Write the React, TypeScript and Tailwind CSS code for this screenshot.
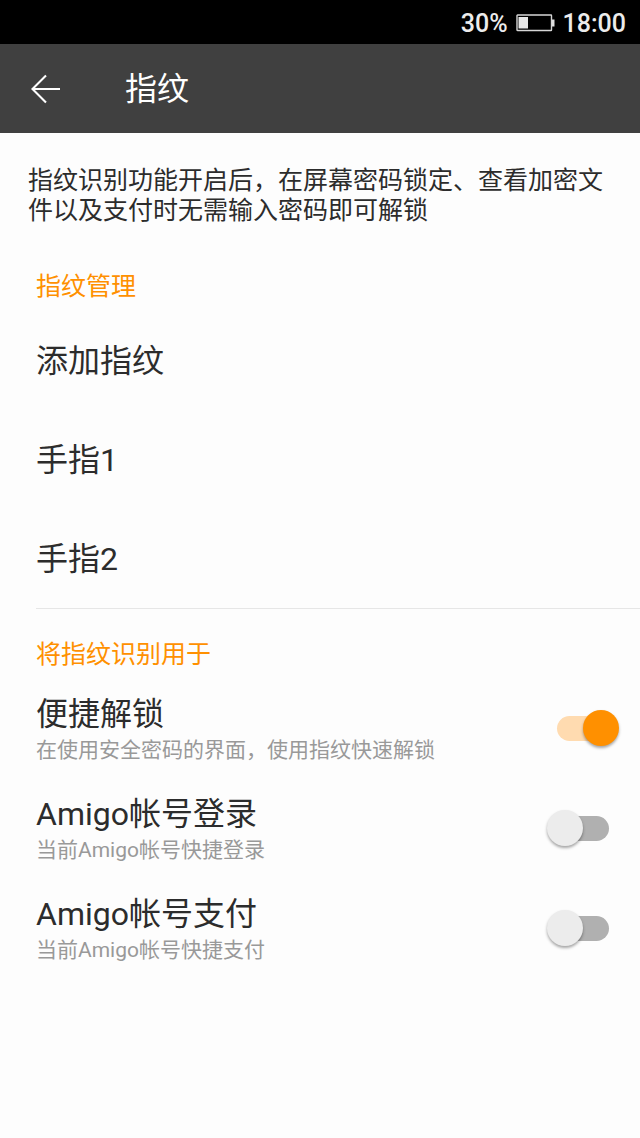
import { useState } from 'react';

interface Feature {
  id: string;
  title: string;
  summary: string;
}

const FINGERS = ['手指1', '手指2'];

const FEATURES: Feature[] = [
  { id: 'unlock', title: '便捷解锁', summary: '在使用安全密码的界面，使用指纹快速解锁' },
  { id: 'login', title: 'Amigo帐号登录', summary: '当前Amigo帐号快捷登录' },
  { id: 'pay', title: 'Amigo帐号支付', summary: '当前Amigo帐号快捷支付' },
];

function StatusBar() {
  return (
    <div className="flex h-11 items-center justify-end gap-2 bg-black pt-1 pr-[14px] text-[25px] leading-8 font-medium text-[#ececec]">
      <span>30%</span>
      <svg className="h-[18px] w-[39px] -translate-y-px" viewBox="0 0 39 18" fill="none" aria-hidden="true">
        <rect x="1" y="1" width="34.5" height="15.5" rx="0.5" stroke="#d6d6d6" strokeWidth="1.4" />
        <path d="M36 5.5h2.5v7H36z" fill="#e0e0e0" />
        <path d="M2.5 3h9.5v11.5h-9.5z" fill="#e8e8e8" />
      </svg>
      <span>18:00</span>
    </div>
  );
}

function Header() {
  return (
    <header className="flex h-[89px] items-center gap-16 bg-[#404040] pl-[30px] text-white">
      <button type="button" aria-label="返回">
        <svg className="h-[30px] w-[31px]" viewBox="0 0 31 30" fill="none" stroke="currentColor" strokeWidth="2.1" aria-hidden="true">
          <path d="M30 15H2.5M16 1.5L2.5 15L16 28.5" />
        </svg>
      </button>
      <h1 className="text-[32px] leading-10">指纹</h1>
    </header>
  );
}

function Switch({ id, checked, onChange }: { id: string; checked: boolean; onChange: () => void }) {
  return (
    <input
      id={id}
      type="checkbox"
      role="switch"
      checked={checked}
      onChange={onChange}
      className="flex h-9 w-[72px] shrink-0 appearance-none items-center px-[10px] before:h-[25px] before:w-[52px] before:rounded-full before:bg-[#b0b0b0] after:absolute after:-ml-[10px] after:size-9 after:rounded-full after:bg-[#ececec] after:shadow-[0_2px_3px_rgba(0,0,0,0.35)] checked:before:bg-[#ffdbb0] checked:after:ml-[26px] checked:after:bg-[#ff9000]"
    />
  );
}

export default function App() {
  const [enabled, setEnabled] = useState<Record<string, boolean>>({ unlock: true });

  const toggle = (id: string) => {
    setEnabled((prev) => ({ ...prev, [id]: !prev[id] }));
  };

  return (
    <div className="min-h-screen bg-[#fdfdfd] font-[Roboto,'Noto_Sans_CJK_SC',sans-serif] text-[#2c2c2c]">
      <StatusBar />
      <Header />

      <main>
        <p className="px-7 pt-[33px] text-[25px] leading-[30px]">
          指纹识别功能开启后，在屏幕密码锁定、查看加密文件以及支付时无需输入密码即可解锁
        </p>

        {/* Enrolled fingerprints */}
        <section className="ml-9 border-b border-[#e6e6e6] pt-[46px]">
          <h2 className="text-[25px] leading-[30px] text-[#ff9000]">指纹管理</h2>
          <div className="pt-[9px]">
            {['添加指纹', ...FINGERS].map((label) => (
              <button key={label} type="button" className="flex h-[99px] w-full items-center text-left text-[32px] leading-10">
                {label}
              </button>
            ))}
          </div>
        </section>

        {/* Where fingerprints can be used */}
        <section className="pt-[31px] pr-[21px] pl-9">
          <h2 className="text-[25px] leading-[30px] text-[#ff9000]">将指纹识别用于</h2>
          <div className="pt-2">
            {FEATURES.map((feature) => (
              <div key={feature.id} className="flex h-[100px] items-center justify-between">
                <label htmlFor={feature.id} className="flex flex-col pt-1">
                  <span className="text-[32px] leading-10">{feature.title}</span>
                  <span className="text-[21px] leading-8 text-[#999]">{feature.summary}</span>
                </label>
                <Switch id={feature.id} checked={!!enabled[feature.id]} onChange={() => toggle(feature.id)} />
              </div>
            ))}
          </div>
        </section>
      </main>
    </div>
  );
}
